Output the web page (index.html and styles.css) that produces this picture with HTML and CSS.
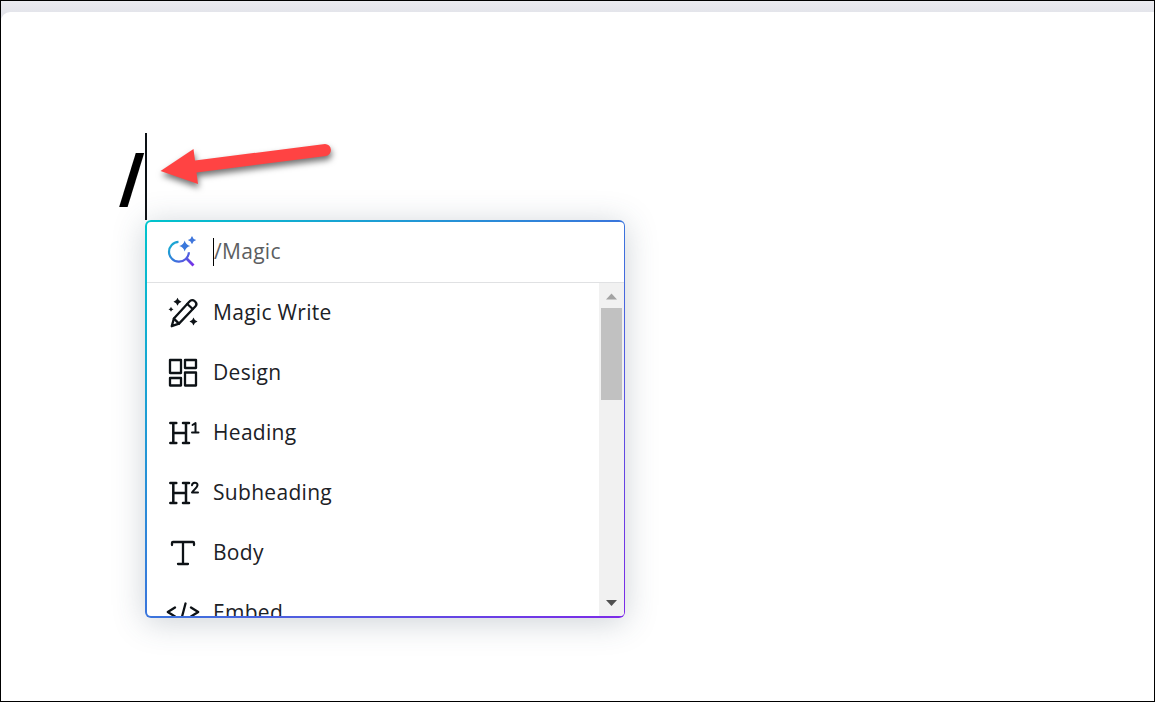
FILE: index.html
```
<!doctype html>
<html lang="en">
<head>
    <meta charset="UTF-8">
    <meta name="viewport" content="width=device-width, initial-scale=1.0">
    <title>Document</title>
    <link rel="stylesheet" href="styles.css">
</head>
<body>
<div class="window">
    <main class="page">
        <div class="line"><span class="slash">/</span><span class="caret"></span></div>

        <div class="menu">
            <div class="menu-inner">
                <div class="search">
                    <svg class="icon" viewBox="0 0 32 32">
                        <defs>
                            <linearGradient id="magic" gradientUnits="userSpaceOnUse" x1="2" y1="6" x2="27" y2="30">
                                <stop offset="0" stop-color="#12b5d0"/>
                                <stop offset=".5" stop-color="#3a75dc"/>
                                <stop offset="1" stop-color="#7d2ae8"/>
                            </linearGradient>
                        </defs>
                        <path d="M11.500 5.800A9.950 9.950 0 1 0 21.900 16.200" fill="none" stroke="url(#magic)" stroke-width="2.200"/>
                        <path d="M19.300 22.200l7.200 7.200" fill="none" stroke="url(#magic)" stroke-width="2.800"/>
                        <path d="M17.700 4.600q1.100 4.300 5.400 5.400q-4.300 1.100-5.400 5.400q-1.100-4.300-5.400-5.400q4.300-1.100 5.400-5.400z" fill="#3a78dc"/>
                        <path d="M25-.1q.9 3.300 4.200 4.200q-3.300.9-4.200 4.200q-.9-3.300-4.200-4.200q3.300-.9 4.200-4.200z" fill="#3f76dc"/>
                    </svg>
                    <span class="search-caret"></span><span class="placeholder">/Magic</span>
                </div>
                <div class="content">
                    <ul class="list">
                        <li class="item">
                            <svg class="icon" viewBox="0 0 32 32">
                                <path class="stroke" d="M4.700 29.200l2.200-7.600L22.700 4.200a3.300 3.300 0 0 1 4.800-.2l.8.800a3.300 3.300 0 0 1 .2 4.500L12 26.600z"/>
                                <path class="stroke" d="M6.900 21.600l5.100 5M20.300 7l5.400 5"/>
                                <path d="M10.500.8q.8 3.200 4 4q-3.200.8-4 4q-.8-3.200-4-4q3.200-.8 4-4zM4 9.800q.5 2 2.500 2.500Q4.500 12.800 4 14.800Q3.500 12.800 1.500 12.300Q3.500 11.800 4 9.800zM26.500 20.500q.8 3.200 4 4q-3.200.8-4 4q-.8-3.200-4-4q3.200-.8 4-4z"/>
                            </svg>
                            <span class="label">Magic Write</span>
                        </li>
                        <li class="item">
                            <svg class="icon" viewBox="0 0 32 32">
                                <path class="stroke" d="M3 3h11v13H3zM18 3h11v8H18zM3 21h11v7.500H3zM18 15.500h11v13H18z"/>
                            </svg>
                            <span class="label">Design</span>
                        </li>
                        <li class="item">
                            <svg class="icon" viewBox="0 0 32 32">
                                <path class="stroke bold" d="M3.300 6h6M16 6h6M3.300 26h6M16 26h6M6.300 6v20M19 6v20M6.300 16H19"/>
                                <path class="stroke thin" d="M25.500 8l3-2v9.500M25 15.500h6.500"/>
                            </svg>
                            <span class="label">Heading</span>
                        </li>
                        <li class="item">
                            <svg class="icon" viewBox="0 0 32 32">
                                <path class="stroke bold" d="M3.300 6h6M16 6h6M3.300 26h6M16 26h6M6.300 6v20M19 6v20M6.300 16H19"/>
                                <path class="stroke thin" d="M25 8.200c.2-3.300 5.500-3.400 5.500-.2 0 2.300-3.500 4.500-5.500 7.500h6"/>
                            </svg>
                            <span class="label">Subheading</span>
                        </li>
                        <li class="item">
                            <svg class="icon" viewBox="0 0 32 32">
                                <path class="stroke" d="M5 8V6q0-1 1-1h20q1 0 1 1v2M16 5v22M11 27h10"/>
                            </svg>
                            <span class="label">Body</span>
                        </li>
                        <li class="item">
                            <svg class="icon" viewBox="0 0 32 32">
                                <path class="stroke" d="M8 10.500L.8 15 8 19.500M24 10.500l7.200 4.500-7.200 4.500M18.500 6.500l-5 19"/>
                            </svg>
                            <span class="label">Embed</span>
                        </li>
                    </ul>
                    <div class="scrollbar">
                        <svg class="arrow-btn" viewBox="0 0 25 25"><path d="M7 16.500l5.500-6 5.500 6z" fill="#a3a3a3"/></svg>
                        <div class="thumb"></div>
                        <svg class="arrow-btn" viewBox="0 0 25 25"><path d="M7 9l5.500 6L18 9z" fill="#505050"/></svg>
                    </div>
                </div>
            </div>
        </div>

        <svg class="pointer" viewBox="0 0 190 60">
            <path d="M10.500 31L43.500 9l1.500 11.500L175 4a6 6 0 0 1 1 11.900L46.500 32.500 48 44z" fill="#ff4343"/>
        </svg>
    </main>
</div>
</body>
</html>
```

FILE: styles.css
```
* {
    box-sizing: border-box;
}

body {
    margin: 0;
    font-family: "Open Sans", "Noto Sans", sans-serif;
    color: #1c2126;
}

.window {
    height: 702px;
    padding-top: 11px;
    border: 1px solid #000;
    background: linear-gradient(#ebebf0, #e3e4ea 12px);
    overflow: hidden;
}

.page {
    position: relative;
    height: 690px;
    padding: 121px 0 0 144px;
    border-radius: 9px 0 0 0;
    background: #fff;
}

/* Typed line with the text cursor */
.line {
    display: flex;
    justify-content: flex-end;
    width: 2px;
    height: 87px;
}

.slash {
    margin-right: 1px;
    font-size: 76px;
    font-weight: 700;
    line-height: 90px;
    color: #000;
    transform: scaleX(0.82);
    transform-origin: right;
}

.caret {
    flex: none;
    width: 2px;
    background: #0d1216;
}

/* Menu, the padding shows the gradient as a border */
.menu {
    width: 480px;
    height: 398px;
    padding: 2px 1px 2px 2px;
    border-radius: 6px;
    background: linear-gradient(to bottom right, #00c4cc, #3a75dc 50%, #7d2ae8);
    box-shadow: 0 4px 32px rgba(57, 76, 96, 0.25);
}

.menu-inner {
    display: flex;
    flex-direction: column;
    height: 100%;
    border-radius: 4px;
    background: #fff;
    overflow: hidden;
}

.search {
    display: flex;
    flex: none;
    align-items: center;
    height: 61px;
    padding-left: 20px;
    border-bottom: 1px solid #e0e1e3;
    font-size: 21px;
    color: #5c5e61;
}

.placeholder,
.label {
    padding-bottom: 2px;
    letter-spacing: 0.3px;
}

.icon {
    flex: none;
    width: 32px;
    height: 32px;
    fill: #0d1216;
    overflow: visible;
}

.stroke {
    fill: none;
    stroke: #0d1216;
    stroke-width: 2.3;
    stroke-linecap: round;
    stroke-linejoin: round;
}

.bold {
    stroke-width: 2.5;
}

.thin {
    stroke-width: 2;
}

.search-caret {
    width: 1px;
    height: 28px;
    margin-left: 14px;
    background: #000;
}

.content {
    display: flex;
    flex: 1;
    min-height: 0;
}

.list {
    flex: 1;
    margin: 0;
    padding: 0;
    list-style: none;
    overflow: hidden;
}

.item {
    display: flex;
    align-items: center;
    gap: 14px;
    height: 60px;
    padding-left: 20px;
    font-size: 21px;
}

/* Scrollbar */
.scrollbar {
    display: flex;
    flex-direction: column;
    width: 25px;
    background: #f1f1f1;
}

.arrow-btn {
    flex: none;
    width: 25px;
    height: 25px;
}

.thumb {
    height: 92px;
    margin: 0 2px auto;
    background: #c1c1c1;
}

/* Red arrow drawn over the page */
.pointer {
    position: absolute;
    top: 128px;
    left: 149px;
    width: 190px;
    height: 60px;
    overflow: visible;
    filter: drop-shadow(1px 4px 3px rgba(0, 0, 0, 0.55));
}
```
